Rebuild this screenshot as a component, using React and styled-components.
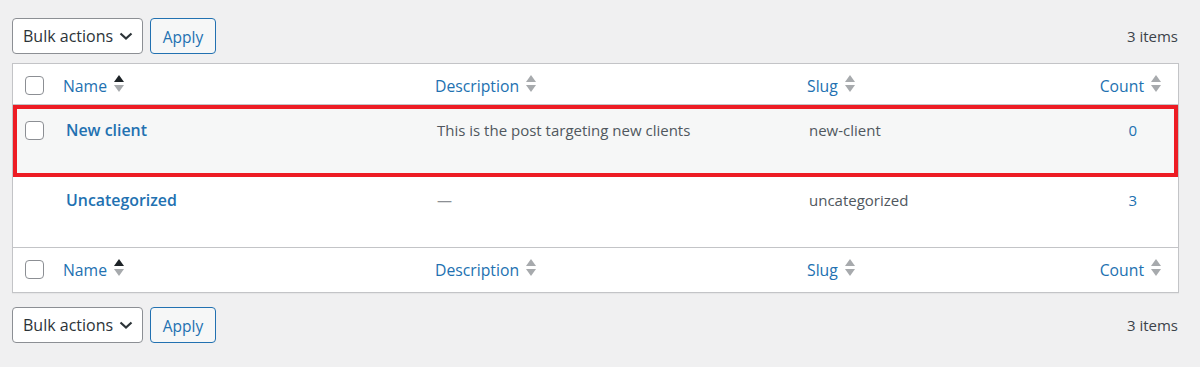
import React from "react";
import styled, { createGlobalStyle } from "styled-components";

const colors = {
  page: "#f0f0f1",
  border: "#c3c4c7",
  link: "#2271b1",
  text: "#50575e",
  dark: "#2c3338",
  stripe: "#f6f7f7",
  highlight: "#ed1c24",
};

const GlobalStyle = createGlobalStyle`
  body {
    margin: 0;
    background: ${colors.page};
    font-family: "Open Sans", "Noto Sans", sans-serif;
  }
`;

const Page = styled.div`
  padding: 18px 21px 26px 12px;
`;

const TableNav = styled.div`
  display: flex;
  align-items: center;
  justify-content: space-between;
  margin: ${({ $bottom }) => ($bottom ? "14px 0 0" : "0 0 9px")};
`;

const Actions = styled.div`
  display: flex;
  gap: 7px;
`;

const Select = styled.div`
  box-sizing: border-box;
  width: 131px;
  height: 36px;
  display: flex;
  align-items: center;
  justify-content: space-between;
  padding: 0 9px 1px 10px;
  background: #fff;
  border: 1px solid #8c8f94;
  border-radius: 4px;
  color: ${colors.dark};
  font-size: 16px;
`;

const Button = styled.div`
  box-sizing: border-box;
  width: 66px;
  height: 36px;
  display: flex;
  align-items: center;
  justify-content: center;
  padding-top: 1px;
  background: ${colors.stripe};
  border: 1px solid ${colors.link};
  border-radius: 4px;
  color: ${colors.link};
  font-size: 15.5px;
`;

const ItemCount = styled.div`
  color: #3c434a;
  font-size: 15px;
  padding-right: 1px;
`;

const Table = styled.div`
  background: #fff;
  border: 1px solid ${colors.border};
  box-shadow: 0 1px 1px rgba(0, 0, 0, 0.04);
`;

const Row = styled.div`
  display: grid;
  grid-template-columns: 47px 372px 372px 1fr 96px;
  box-sizing: border-box;
  height: ${({ $height }) => $height}px;
  background: ${({ $striped }) => ($striped ? colors.stripe : "#fff")};
  border-top: ${({ $borderTop }) =>
    $borderTop ? `1px solid ${colors.border}` : "none"};
  border-bottom: ${({ $borderBottom }) =>
    $borderBottom ? `1px solid ${colors.border}` : "none"};
  outline: ${({ $highlight }) =>
    $highlight ? `4px solid ${colors.highlight}` : "none"};
  outline-offset: -4px;
`;

const CheckCell = styled.div`
  padding: ${({ $top }) => $top}px 0 0 12px;
`;

const Checkbox = styled.div`
  box-sizing: border-box;
  width: 19px;
  height: 19px;
  background: #fff;
  border: 1px solid #8c8f94;
  border-radius: 4px;
`;

const HeadCell = styled.div`
  display: flex;
  justify-content: ${({ $right }) => ($right ? "flex-end" : "flex-start")};
  padding: 11px ${({ $right }) => ($right ? "17px" : "0")} 0 3px;
  color: ${colors.link};
  font-size: 15.75px;
  line-height: 22px;
`;

const SortIcon = styled.svg`
  width: 10px;
  height: 17px;
  margin: 0 0 0 7px;
  flex-shrink: 0;
`;

const Cell = styled.div`
  padding: ${({ $top }) => $top}px ${({ $num }) => ($num ? "41px" : "0")} 0 5px;
  text-align: ${({ $num }) => ($num ? "right" : "left")};
  color: ${({ $num }) => ($num ? colors.link : colors.text)};
  font-size: 15px;
  line-height: 22px;
`;

const RowTitle = styled.a`
  color: ${colors.link};
  font-weight: 600;
  font-size: 15.9px;
  text-decoration: none;
  padding-left: 1px;
`;

const Dash = styled.span`
  color: #8c8f94;
`;

const Chevron = () => (
  <svg width="14" height="8" viewBox="0 0 14 8">
    <path
      d="M1.5 1.5 L7 6.5 L12.5 1.5"
      fill="none"
      stroke={colors.dark}
      strokeWidth="2.2"
    />
  </svg>
);

const Sort = ({ active }) => (
  <SortIcon viewBox="0 0 10 17">
    <path d="M0 7 L5 0 L10 7 Z" fill={active ? "#1d2327" : "#a7aaad"} />
    <path d="M0 10 L10 10 L5 17 Z" fill="#a7aaad" />
  </SortIcon>
);

const columns = [
  { label: "Name", active: true },
  { label: "Description" },
  { label: "Slug" },
  { label: "Count", right: true },
];

const terms = [
  {
    name: "New client",
    description: "This is the post targeting new clients",
    slug: "new-client",
    count: 0,
    checkable: true,
  },
  {
    name: "Uncategorized",
    description: null,
    slug: "uncategorized",
    count: 3,
  },
];

const HeaderRow = ({ footer }) => (
  <Row
    $height={footer ? 45 : 41}
    $borderBottom={!footer}
    $borderTop={footer}
  >
    <CheckCell $top={12}>
      <Checkbox />
    </CheckCell>
    {columns.map((col) => (
      <HeadCell key={col.label} $right={col.right}>
        {col.label}
        <Sort active={col.active} />
      </HeadCell>
    ))}
  </Row>
);

const Nav = ({ bottom }) => (
  <TableNav $bottom={bottom}>
    <Actions>
      <Select>
        Bulk actions
        <Chevron />
      </Select>
      <Button>Apply</Button>
    </Actions>
    <ItemCount>3 items</ItemCount>
  </TableNav>
);

export default function App() {
  return (
    <>
      <GlobalStyle />
      <Page>
        <Nav />
        <Table>
          <HeaderRow />
          {terms.map((term, i) => {
            const top = i === 0 ? 14 : 12;
            return (
              <Row
                key={term.slug}
                $height={i === 0 ? 72 : 70}
                $striped={i === 0}
                $highlight={i === 0}
              >
                <CheckCell $top={16}>
                  {term.checkable && <Checkbox />}
                </CheckCell>
                <Cell $top={top}>
                  <RowTitle href="#">{term.name}</RowTitle>
                </Cell>
                <Cell $top={top}>
                  {term.description || <Dash>—</Dash>}
                </Cell>
                <Cell $top={top}>{term.slug}</Cell>
                <Cell $top={top} $num>
                  {term.count}
                </Cell>
              </Row>
            );
          })}
          <HeaderRow footer />
        </Table>
        <Nav bottom />
      </Page>
    </>
  );
}
